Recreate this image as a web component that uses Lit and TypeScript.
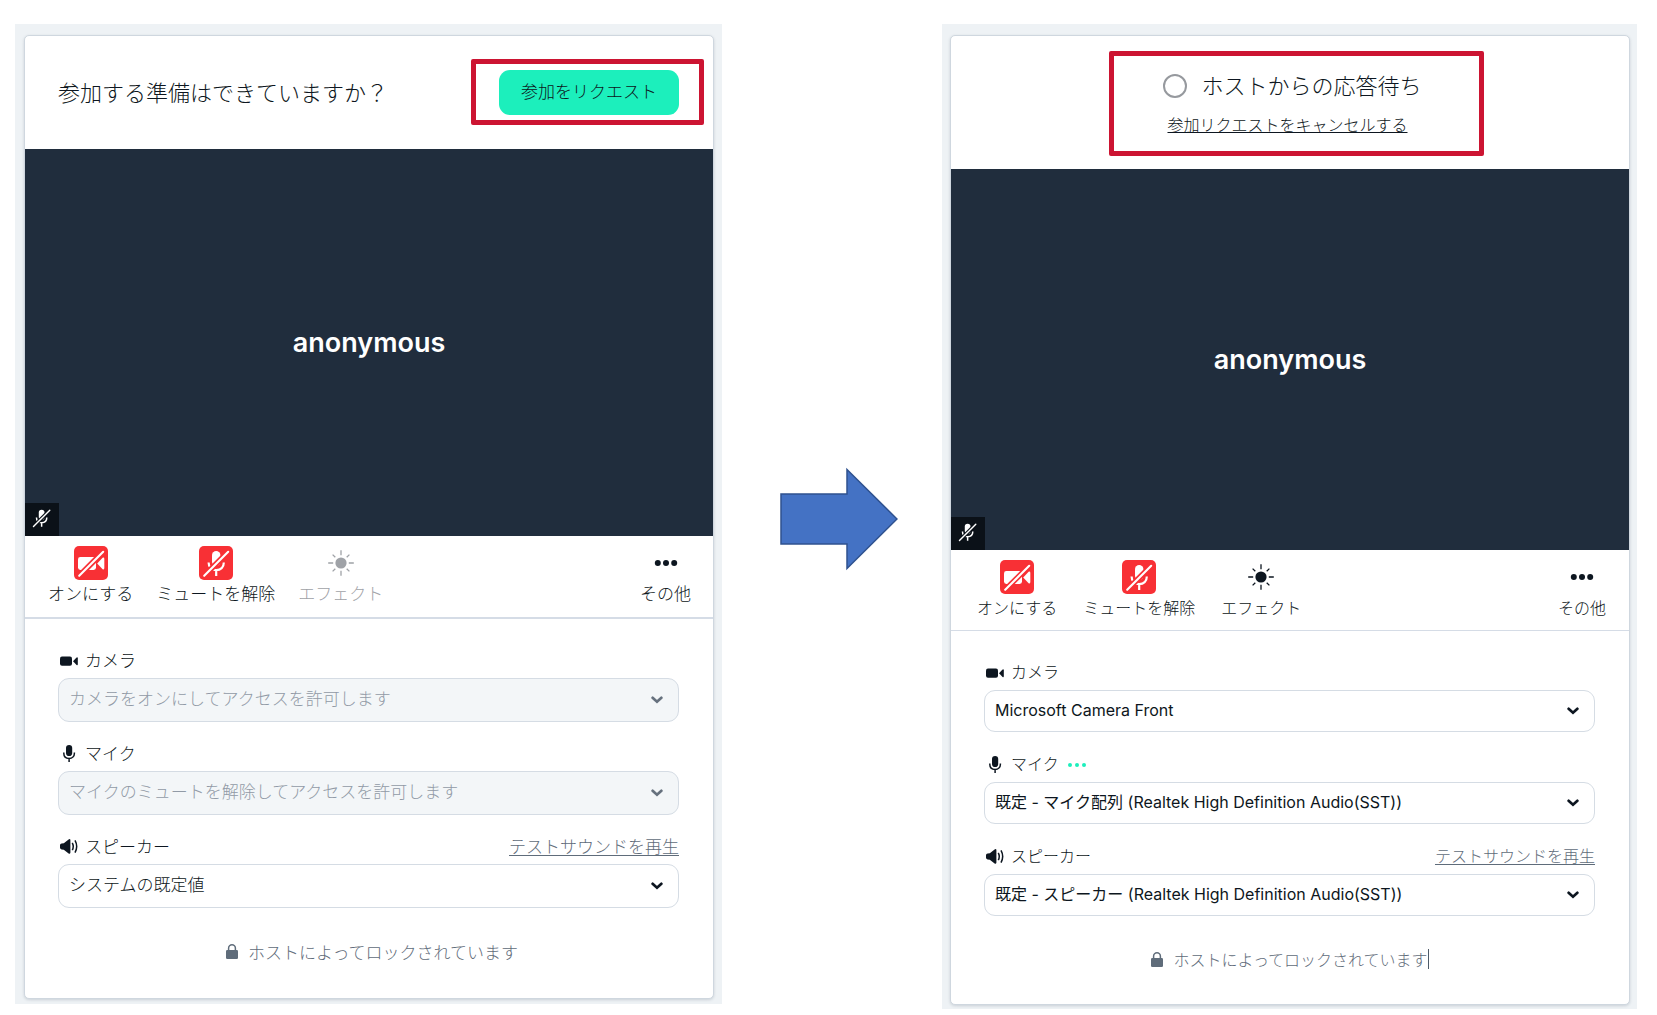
import { LitElement, html, css, svg, nothing } from "lit";
import { customElement, property } from "lit/decorators.js";

const micGlyph = (cut: string) => svg`
  <rect x="13" y="5" width="8.4" height="15" rx="4.2" fill="#fff"></rect>
  <path d="M9.6 16.5c0 5 3.2 7.6 7.6 7.6s7.6-2.6 7.6-7.6M17.2 24.5V30" fill="none" stroke="#fff" stroke-width="2.2"></path>
  <path d="M4 31 30 5" stroke=${cut} stroke-width="5.4"></path>
  <path d="M5.2 29.8 29.2 5.8" stroke="#fff" stroke-width="2.1" stroke-linecap="round"></path>`;

const camOff = html`<svg viewBox="0 0 34 34" width="34" height="34" aria-hidden="true">
  <rect width="34" height="34" rx="5" fill="#f83035"></rect>
  <rect x="4" y="11" width="18" height="13" rx="2.4" fill="#fff"></rect>
  <path d="M23.2 17.5 28.6 11.8Q30.3 11 30.3 13V22Q30.3 24 28.6 23.2Z" fill="#fff"></path>
  <path d="M4 31 30 5" stroke="#f83035" stroke-width="5.4"></path>
  <path d="M5.2 29.8 29.2 5.8" stroke="#fff" stroke-width="2.1" stroke-linecap="round"></path>
</svg>`;

const micOff = html`<svg viewBox="0 0 34 34" width="34" height="34" aria-hidden="true">
  <rect width="34" height="34" rx="5" fill="#f83035"></rect>
  ${micGlyph("#f83035")}
</svg>`;

const sun = html`<svg viewBox="0 0 34 34" width="34" height="34" aria-hidden="true">
  <circle cx="17" cy="17" r="5.6" fill="currentColor"></circle>
  <path d="M17 4.2v5M17 24.8v5M4.2 17h5M24.8 17h5M8.6 8.6l2.7 2.7M22.7 22.7l2.7 2.7M8.6 25.4l2.7-2.7M22.7 11.3l2.7-2.7" stroke="currentColor" stroke-width="1.3"></path>
</svg>`;

const dots = html`<svg viewBox="0 0 34 34" width="34" height="34" aria-hidden="true" fill="currentColor">
  <circle cx="8.8" cy="17" r="3"></circle><circle cx="17" cy="17" r="3"></circle><circle cx="25.2" cy="17" r="3"></circle>
</svg>`;

const icons = {
  camera: html`<svg viewBox="0 0 18 22" width="18" height="22" aria-hidden="true" fill="currentColor">
    <rect x="0" y="8.6" width="12" height="9.2" rx="2"></rect>
    <path d="M13 13.2 16.6 9.4Q17.8 8.8 17.8 10.2V16.2Q17.8 17.6 16.6 17Z"></path></svg>`,
  mic: html`<svg viewBox="0 0 18 22" width="18" height="22" aria-hidden="true">
    <rect x="6" y="4" width="6.2" height="11" rx="3.1" fill="currentColor"></rect>
    <path d="M3.8 11.4v.8c0 3.4 2.2 5.2 5.3 5.2s5.3-1.8 5.3-5.2v-.8M9.1 17.4V21" fill="none" stroke="currentColor" stroke-width="1.5"></path></svg>`,
  speaker: html`<svg viewBox="0 0 18 22" width="18" height="22" aria-hidden="true">
    <path d="M0 11.2Q0 9.800 1.600 9.600L3.800 9.200 8.600 5.400Q10.400 4.400 10.400 6.200V18.600Q10.400 20.400 8.600 19.400L3.800 15.800 1.600 15.400Q0 15.200 0 13.800Z" fill="currentColor"></path>
    <path d="M12.300 8.800q1.900 3.700 0 7.400M15 6.400q3.400 6.100 0 12.200" fill="none" stroke="currentColor" stroke-width="1.500"></path></svg>`,
};

interface Device {
  kind: "camera" | "mic" | "speaker";
  label: string;
  value: string;
  disabled?: boolean;
  level?: boolean;
  test?: boolean;
}

@customElement("lobby-card")
class LobbyCard extends LitElement {
  @property({ type: Boolean, reflect: true }) waiting = false;
  @property({ attribute: false }) devices: Device[] = [];

  static styles = css`
    :host {
      --text: 17px;
      --field: 44px;
      --field-gap: 15px;
      display: block;
      box-sizing: border-box;
      padding: 11px 8px 5px 9px;
      background: #eef2f5;
      color: #0d1620;
      font-family: Inter, "Noto Sans CJK JP", sans-serif;
      font-size: var(--text);
      font-weight: 300;
    }
    :host([waiting]) {
      --text: 16px;
      --field: 42px;
      --field-gap: 16px;
      padding: 11px 7px 4px 8px;
    }
    .card {
      border: 1px solid #cfd7df;
      border-radius: 5px;
      background: #fff;
      box-shadow: 0 1px 3px rgba(60, 80, 100, 0.2);
    }
    button, select, a {
      font: inherit;
      color: inherit;
    }
    button {
      border: 0;
      background: none;
      padding: 0;
      cursor: pointer;
    }
    svg {
      display: block;
      flex: none;
    }
    .head {
      display: flex;
      align-items: center;
      justify-content: space-between;
      height: 113px;
      box-sizing: border-box;
      padding: 0 34px 0 33px;
    }
    .head.wait {
      height: 133px;
      justify-content: center;
      padding: 10px 0 0 5px;
    }
    h1 {
      margin: 0;
      font-size: 22px;
      font-weight: 300;
      line-height: 32px;
      white-space: nowrap;
    }
    .marked {
      position: relative;
    }
    .marked::after {
      content: "";
      position: absolute;
      inset: -11px -25px -10px -28px;
      border: 5px solid #cc1432;
      border-radius: 2px;
      pointer-events: none;
    }
    .wait .marked::after {
      inset: -19px -62px -11px -54px;
    }
    .request {
      display: block;
      height: 45px;
      padding: 0 22px 4px;
      border-radius: 11px;
      background: #1cefbc;
      white-space: nowrap;
    }
    .status {
      display: flex;
      align-items: center;
      gap: 14px;
    }
    .ring {
      box-sizing: border-box;
      width: 24px;
      height: 24px;
      border: 2px solid #96999e;
      border-radius: 50%;
    }
    .cancel {
      display: block;
      padding-left: 4px;
      line-height: 39px;
      margin-top: 4px;
      white-space: nowrap;
    }
    .video {
      position: relative;
      display: grid;
      place-items: center;
      aspect-ratio: 16 / 9;
      background: #202d3d;
      color: #fff;
      font-size: 27px;
      line-height: 32px;
      font-weight: 600;
    }
    .badge {
      position: absolute;
      left: 0;
      bottom: 0;
      display: grid;
      place-items: center;
      box-sizing: border-box;
      width: 34px;
      height: 33px;
      padding: 0 2px 2px 0;
      background: #0b1118;
    }
    .tools {
      display: flex;
      gap: 23px;
      padding: 10px 22px 9px 23px;
      border-bottom: 2px solid #d5dce6;
    }
    :host([waiting]) .tools {
      gap: 26px;
      padding: 10px 23px 8px 26px;
      border-bottom-width: 1px;
    }
    .tool {
      display: flex;
      flex-direction: column;
      align-items: center;
      line-height: 28px;
      white-space: nowrap;
    }
    .tool:last-child {
      margin-left: auto;
    }
    .tool:disabled {
      color: #9fa2a7;
    }
    .fields {
      display: flex;
      flex-direction: column;
      gap: var(--field-gap);
      padding: 25px 34px 0 33px;
    }
    .row {
      display: flex;
      align-items: center;
      height: 30px;
      padding-left: 2px;
      margin-bottom: 4px;
    }
    label {
      display: flex;
      align-items: center;
      gap: 7px;
    }
    .level {
      display: flex;
      gap: 3px;
      padding: 3px 0 0 9px;
    }
    .level i {
      width: 4px;
      height: 4px;
      border-radius: 50%;
      background: #1cefbc;
    }
    .test {
      margin-left: auto;
      color: #5f6c7a;
      text-underline-offset: 2px;
    }
    .pick {
      display: grid;
      align-items: center;
    }
    .pick > * {
      grid-area: 1 / 1;
    }
    select {
      appearance: none;
      width: 100%;
      height: var(--field);
      box-sizing: border-box;
      padding: 0 44px 2px 10px;
      border: 1px solid #d5dce4;
      border-radius: 11px;
      background: #fff;
      text-overflow: ellipsis;
    }
    :host([waiting]) select {
      font-weight: 400;
    }
    select:disabled {
      background: #f3f6f8;
      color: #919aa6;
      opacity: 1;
    }
    .chevron {
      justify-self: end;
      margin-right: 16px;
      pointer-events: none;
    }
    select:disabled + .chevron {
      color: #66717e;
    }
    .locked {
      display: flex;
      align-items: center;
      justify-content: center;
      height: 30px;
      margin: 28px 0 0;
      padding: 0 0 32px 6px;
      color: #5f6c7a;
    }
    :host([waiting]) .locked {
      padding: 0 0 30px;
    }
    .locked svg {
      margin-right: 10px;
    }
    .caret {
      width: 1px;
      height: 20px;
      background: #4d5a68;
    }
  `;

  private head() {
    return this.waiting
      ? html`<header class="head wait">
          <div class="marked">
            <div class="status" role="status"><span class="ring"></span><h1>ホストからの応答待ち</h1></div>
            <a class="cancel" href="#cancel">参加リクエストをキャンセルする</a>
          </div>
        </header>`
      : html`<header class="head">
          <h1>参加する準備はできていますか？</h1>
          <div class="marked"><button class="request" type="button">参加をリクエスト</button></div>
        </header>`;
  }

  private field(d: Device) {
    return html`<div>
      <div class="row">
        <label for=${d.kind}>${icons[d.kind]}<span>${d.label}</span></label>
        ${d.level ? html`<span class="level"><i></i><i></i><i></i></span>` : nothing}
        ${d.test ? html`<a class="test" href="#test">テストサウンドを再生</a>` : nothing}
      </div>
      <div class="pick">
        <select id=${d.kind} ?disabled=${!!d.disabled}><option>${d.value}</option></select>
        <svg class="chevron" viewBox="0 0 12 8" width="12" height="8" aria-hidden="true">
          <path d="M1.600 1.800 6 5.800 10.400 1.800" fill="none" stroke="currentColor" stroke-width="2.700" stroke-linecap="round"></path>
        </svg>
      </div>
    </div>`;
  }

  render() {
    return html`<section class="card">
      ${this.head()}
      <div class="video">
        <span>anonymous</span>
        <span class="badge"><svg viewBox="3 4 28 28" width="19" height="19" aria-hidden="true">${micGlyph("#0b1118")}</svg></span>
      </div>
      <div class="tools">
        <button class="tool" type="button">${camOff}<span>オンにする</span></button>
        <button class="tool" type="button">${micOff}<span>ミュートを解除</span></button>
        <button class="tool" type="button" ?disabled=${!this.waiting}>${sun}<span>エフェクト</span></button>
        <button class="tool" type="button">${dots}<span>その他</span></button>
      </div>
      <div class="fields">${this.devices.map((d) => this.field(d))}</div>
      <p class="locked">
        <svg viewBox="0 0 12 15" width="12" height="15" aria-hidden="true">
          <rect y="6" width="12" height="9" rx="1.300" fill="currentColor"></rect>
          <path d="M2.600 7V4.200a3.400 3.400 0 0 1 6.800 0V7" fill="none" stroke="currentColor" stroke-width="1.500"></path>
        </svg>
        <span>ホストによってロックされています</span>${this.waiting ? html`<i class="caret"></i>` : nothing}
      </p>
    </section>`;
  }
}

@customElement("app-root")
class AppRoot extends LitElement {
  static styles = css`
    :host {
      display: block;
      background: #fff;
    }
    .page {
      display: grid;
      grid-template-columns: minmax(0, 707fr) 220px minmax(0, 695fr);
      align-items: start;
      padding: 24px 20px 6px 15px;
    }
    .arrow {
      display: block;
      align-self: center;
      justify-self: center;
      margin: 5px 0 0 14px;
    }
  `;

  private idle: Device[] = [
    { kind: "camera", label: "カメラ", value: "カメラをオンにしてアクセスを許可します", disabled: true },
    { kind: "mic", label: "マイク", value: "マイクのミュートを解除してアクセスを許可します", disabled: true },
    { kind: "speaker", label: "スピーカー", value: "システムの既定値", test: true },
  ];

  private ready: Device[] = [
    { kind: "camera", label: "カメラ", value: "Microsoft Camera Front" },
    { kind: "mic", label: "マイク", value: "既定 - マイク配列 (Realtek High Definition Audio(SST))", level: true },
    { kind: "speaker", label: "スピーカー", value: "既定 - スピーカー (Realtek High Definition Audio(SST))", test: true },
  ];

  render() {
    return html`<main class="page">
      <lobby-card .devices=${this.idle}></lobby-card>
      <svg class="arrow" viewBox="0 0 118 104" width="118" height="104" aria-hidden="true">
        <path d="M1 27H67V2.500L117 52 67 101.500V77H1Z" fill="#4472c4" stroke="#2f528f" stroke-width="1.500"></path>
      </svg>
      <lobby-card waiting .devices=${this.ready}></lobby-card>
    </main>`;
  }
}
